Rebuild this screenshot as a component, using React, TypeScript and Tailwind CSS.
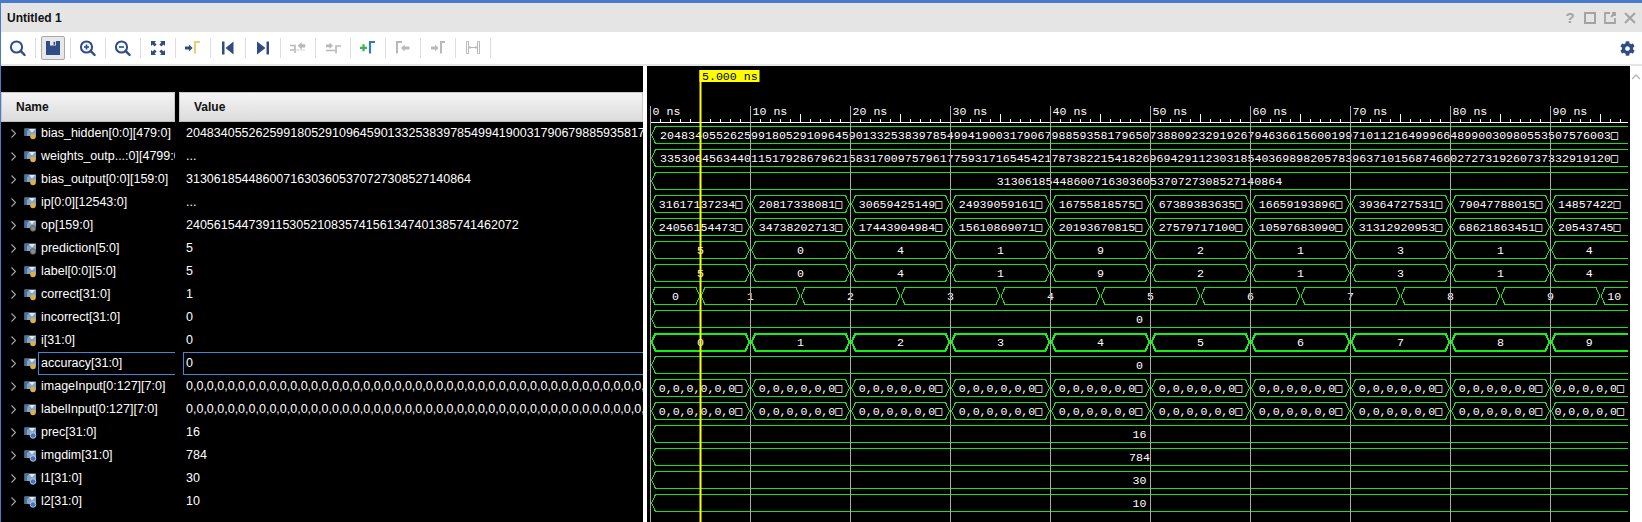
import { ReactNode } from 'react';
import { FaCog } from 'react-icons/fa';

const NAVY = '#2f4c86';
const GRAY = '#b9b9b9';
const GREEN = '#16e316';

const BIAS_HIDDEN =
  '2048340552625991805291096459013325383978549941900317906798859358179650738809232919267946366156001997101121649996648990030980553507576003□';
const WEIGHTS =
  '3353064563440115179286796215831700975796177593171654542178738221541826969429112303185403698982057839637101568746602727319260737332919120□';
const BIAS_OUTPUT = '31306185448600716303605370727308527140864';
const ZEROS = Array(45).fill('0').join(',');

type IconKind = 'lock' | 'gear' | 'param';

const signals: { name: string; value: string; icon: IconKind; selected?: boolean }[] = [
  { name: 'bias_hidden[0:0][479:0]', value: BIAS_HIDDEN.slice(0, 66), icon: 'lock' },
  { name: 'weights_outp...:0][4799:0]', value: '...', icon: 'lock' },
  { name: 'bias_output[0:0][159:0]', value: BIAS_OUTPUT, icon: 'lock' },
  { name: 'ip[0:0][12543:0]', value: '...', icon: 'lock' },
  { name: 'op[159:0]', value: '240561544739115305210835741561347401385741462072', icon: 'gear' },
  { name: 'prediction[5:0]', value: '5', icon: 'gear' },
  { name: 'label[0:0][5:0]', value: '5', icon: 'lock' },
  { name: 'correct[31:0]', value: '1', icon: 'lock' },
  { name: 'incorrect[31:0]', value: '0', icon: 'lock' },
  { name: 'i[31:0]', value: '0', icon: 'lock' },
  { name: 'accuracy[31:0]', value: '0', icon: 'lock', selected: true },
  { name: 'imageInput[0:127][7:0]', value: ZEROS, icon: 'lock' },
  { name: 'labelInput[0:127][7:0]', value: ZEROS, icon: 'lock' },
  { name: 'prec[31:0]', value: '16', icon: 'param' },
  { name: 'imgdim[31:0]', value: '784', icon: 'param' },
  { name: 'l1[31:0]', value: '30', icon: 'param' },
  { name: 'l2[31:0]', value: '10', icon: 'param' },
];

const ipVals = ['31617137234□', '20817338081□', '30659425149□', '24939059161□', '16755818575□', '67389383635□', '16659193896□', '39364727531□', '79047788015□', '14857422□'];
const opVals = ['24056154473□', '34738202713□', '17443904984□', '15610869071□', '20193670815□', '27579717100□', '10597683090□', '31312920953□', '68621863451□', '20543745□'];
const predVals = ['5', '0', '4', '1', '9', '2', '1', '3', '1', '4'];
const countVals = ['0', '1', '2', '3', '4', '5', '6', '7', '8', '9'];
const zeroVals = [...Array(9).fill('0,0,0,0,0,0□'), '0,0,0,0,0□'];

const X0 = 650.5;
const XEND = 1628;
const ticks = Array.from({ length: 10 }, (_, k) => X0 + k * 100);

function Bus({ a, b, row, gap = 1, openRight = false, color = GREEN, thick = false }: { a: number; b: number; row: number; gap?: number; openRight?: boolean; color?: string; thick?: boolean }) {
  const top = 122 + row * 23 + 4.5;
  const bot = top + 17;
  const mid = top + 8.5;
  const pts = openRight
    ? `${b},${top} ${a + gap + 4},${top} ${a + gap},${mid} ${a + gap + 4},${bot} ${b},${bot}`
    : `${a + gap},${mid} ${a + gap + 4},${top} ${b - gap - 4},${top} ${b - gap},${mid} ${b - gap - 4},${bot} ${a + gap + 4},${bot} ${a + gap},${mid}`;
  return <polyline points={pts} fill="none" stroke={color} strokeWidth={thick ? 2 : 1} shapeRendering="crispEdges" />;
}

function WaveText({ x, row, children, anchor = 'middle', fit }: { x: number; row: number; children: string; anchor?: 'middle' | 'start'; fit?: number }) {
  const clipped = children.endsWith('□');
  return (
    <text x={x} y={122 + row * 23 + 17} textAnchor={anchor} textLength={fit} className="fill-white text-[11.6px] font-['Liberation_Mono',monospace]">
      {clipped ? children.slice(0, -1) : children}
      {clipped && <tspan className="font-['DejaVu_Sans_Mono',monospace]">□</tspan>}
    </text>
  );
}

function SegRow({ row, vals, thick }: { row: number; vals: string[]; thick?: boolean }) {
  return (
    <>
      {vals.map((v, k) => {
        const a = ticks[k];
        const last = k === vals.length - 1;
        const b = last ? XEND : ticks[k + 1];
        return (
          <g key={k}>
            <Bus a={a} b={b} row={row} openRight={last} thick={thick} color={thick ? '#14f014' : GREEN} />
            <WaveText x={(a + b) / 2} row={row}>{v}</WaveText>
          </g>
        );
      })}
    </>
  );
}

function WaveView() {
  const edges = [X0, ...ticks.map((t) => t + 50), XEND];
  const rulerMinor = Array.from({ length: 98 }, (_, k) => X0 + k * 10);
  return (
    <svg viewBox="647 66 983 456" className="block h-[456px] w-[983px]">
      {/* ruler */}
      <line x1={650} x2={XEND} y1={122.5} y2={122.5} stroke="#fff" shapeRendering="crispEdges" />
      {rulerMinor.map((x, k) => (
        <line key={k} x1={x} x2={x} y1={k % 5 === 0 ? 114 : 119} y2={122} stroke="#fff" shapeRendering="crispEdges" />
      ))}
      {ticks.map((x, k) => (
        <text key={k} x={x + 2} y={114.5} className="fill-white text-[11.6px] font-['Liberation_Mono',monospace]">
          {k * 10} ns
        </text>
      ))}

      {/* long values */}
      <Bus a={X0} b={XEND} row={0} openRight />
      <WaveText x={660} row={0} anchor="start" fit={958}>{BIAS_HIDDEN}</WaveText>
      <Bus a={X0} b={XEND} row={1} openRight />
      <WaveText x={660} row={1} anchor="start" fit={958}>{WEIGHTS}</WaveText>
      <Bus a={X0} b={XEND} row={2} openRight />
      <WaveText x={1139.5} row={2}>{BIAS_OUTPUT}</WaveText>

      <SegRow row={3} vals={ipVals} />
      <SegRow row={4} vals={opVals} />
      <SegRow row={5} vals={predVals} />
      <SegRow row={6} vals={predVals} />

      {/* correct changes on the falling edge, so it sits half a period over */}
      {[...countVals, '10'].map((v, k) => {
        const a = edges[k];
        const b = edges[k + 1];
        const last = k === 10;
        return (
          <g key={k}>
            <Bus a={a} b={b} row={7} gap={0.5} openRight={last} />
            <WaveText x={(a + b) / 2} row={7}>{v}</WaveText>
          </g>
        );
      })}

      <Bus a={X0} b={XEND} row={8} openRight />
      <WaveText x={1139.5} row={8}>0</WaveText>
      <SegRow row={9} vals={countVals} thick />
      <Bus a={X0} b={XEND} row={10} openRight />
      <WaveText x={1139.5} row={10}>0</WaveText>
      <SegRow row={11} vals={zeroVals} />
      <SegRow row={12} vals={zeroVals} />
      {['16', '784', '30', '10'].map((v, k) => (
        <g key={v}>
          <Bus a={X0} b={XEND} row={13 + k} openRight />
          <WaveText x={1139.5} row={13 + k}>{v}</WaveText>
        </g>
      ))}

      {/* grid */}
      {ticks.map((x) => (
        <line key={x} x1={x} x2={x} y1={106} y2={522} stroke="#a9a9a9" shapeRendering="crispEdges" />
      ))}

      {/* cursor */}
      <rect x={699.5} y={70} width={2} height={452} fill="#ffff00" />
      <rect x={699.5} y={70} width={60} height={12} fill="#ffff00" />
      <text x={702} y={80} className="fill-black text-[11.6px] font-['Liberation_Mono',monospace]">
        5.000 ns
      </text>
    </svg>
  );
}

function ToolIcon({ children }: { children: ReactNode }) {
  return (
    <svg viewBox="0 0 20 20" className="h-5 w-5">
      {children}
    </svg>
  );
}

function Glass({ inner }: { inner?: 'plus' | 'minus' }) {
  return (
    <ToolIcon>
      <circle cx="8.5" cy="9" r="5.6" fill="#f4f7fb" stroke={NAVY} strokeWidth="2" />
      <path d="M12.8 13.2 L16.6 17" stroke={NAVY} strokeWidth="2.4" strokeLinecap="round" />
      {inner && <path d="M6 9 H11" stroke={NAVY} strokeWidth="1.6" />}
      {inner === 'plus' && <path d="M8.5 6.5 V11.5" stroke={NAVY} strokeWidth="1.6" />}
    </ToolIcon>
  );
}

const tools: ReactNode[] = [
  <Glass key="find" />,
  <ToolIcon key="save">
    <path d="M3 3 H17 V17 H3 Z" fill={NAVY} />
    <path d="M7 3 H13 V7.5 H7 Z" fill="#e8e8e8" />
    <path d="M10.5 3.8 H12.2 V6.8 H10.5 Z" fill={NAVY} />
  </ToolIcon>,
  <Glass key="in" inner="plus" />,
  <Glass key="out" inner="minus" />,
  <ToolIcon key="fit">
    <path d="M3 3 H8 L6.6 4.6 L8.6 6.6 L6.6 8.6 L4.6 6.6 L3 8 Z M17 3 V8 L15.4 6.6 L13.4 8.6 L11.4 6.6 L13.4 4.6 L12 3 Z M3 17 V12 L4.6 13.4 L6.6 11.4 L8.6 13.4 L6.6 15.4 L8 17 Z M17 17 H12 L13.4 15.4 L11.4 13.4 L13.4 11.4 L15.4 13.4 L17 12 Z" fill={NAVY} />
  </ToolIcon>,
  <ToolIcon key="goto">
    <path d="M2 8.4 H6 V6.4 L9.6 10 L6 13.6 V11.6 H2 Z" fill={NAVY} />
    <path d="M12 15.5 V4 H17" fill="none" stroke="#e6cf7c" strokeWidth="2.2" />
  </ToolIcon>,
  <ToolIcon key="first">
    <path d="M4 3.5 H6.5 V16.5 H4 Z M15.5 3.5 V16.5 L7.5 10 Z" fill={NAVY} />
  </ToolIcon>,
  <ToolIcon key="last">
    <path d="M4 3.5 L12.5 10 L4 16.5 Z M13.5 3.5 H16 V16.5 H13.5 Z" fill={NAVY} />
  </ToolIcon>,
  <ToolIcon key="prev">
    <path d="M2 7.5 H7 V15 M2 12 H6" fill="none" stroke={GRAY} strokeWidth="1.6" />
    <path d="M10 7.8 L13.5 4.6 V6.6 H17 V9.2 H13.5 V11 Z M8 12 H17" fill={GRAY} stroke={GRAY} strokeWidth="0.6" />
  </ToolIcon>,
  <ToolIcon key="next">
    <path d="M3 6.4 H6.5 V4.6 L10 7.8 L6.5 11 V9.2 H3 Z" fill={GRAY} />
    <path d="M3 12.5 H12 M18 8 H13 V15.5" fill="none" stroke={GRAY} strokeWidth="1.6" />
  </ToolIcon>,
  <ToolIcon key="add">
    <path d="M2 9.8 H9 M5.5 6.3 V13.3" stroke="#3bb44a" strokeWidth="2.2" />
    <path d="M12 15.5 V4 H17" fill="none" stroke="#2f7fb8" strokeWidth="2.2" />
  </ToolIcon>,
  <ToolIcon key="mprev">
    <path d="M4 15.5 V4 H9" fill="none" stroke={GRAY} strokeWidth="2" />
    <path d="M8 10 L11.6 6.6 V8.6 H16.5 V11.4 H11.6 V13.4 Z" fill={GRAY} />
  </ToolIcon>,
  <ToolIcon key="mnext">
    <path d="M3 8.6 H7 V6.8 L10.6 10 L7 13.2 V11.4 H3 Z" fill={GRAY} />
    <path d="M13 15.5 V4 H17" fill="none" stroke={GRAY} strokeWidth="2" />
  </ToolIcon>,
  <ToolIcon key="swap">
    <path d="M3.5 3.5 V15.5 H5.5 V3.5 Z M14.5 3.5 V15.5 H16.5 V3.5 Z" fill="none" stroke={GRAY} strokeWidth="1" />
    <path d="M6 9.5 H14 M7.5 8 L6 9.5 L7.5 11 M12.5 8 L14 9.5 L12.5 11" fill="none" stroke={GRAY} strokeWidth="1" />
  </ToolIcon>,
];

function SignalIcon({ kind }: { kind: IconKind }) {
  return (
    <svg viewBox="0 0 13 13" className="mr-[4px] h-[13px] w-[13px] shrink-0">
      <path d="M0.5 1.5 H12 V9 H0.5 Z" fill="#86a3c2" />
      <path d="M0.5 1.5 H5.5 L3 4.5 V9 H0.5 Z" fill="#4d7299" />
      <path d="M5 2 L11 2 L8 5.5 Z" fill="#e2ebf4" />
      {kind === 'lock' && <circle cx="9" cy="9.5" r="2.8" fill="#dcb04e" />}
      {kind === 'gear' && <circle cx="9" cy="9.5" r="2.8" fill="#8b8b8b" stroke="#555" strokeWidth="0.8" />}
      {kind === 'param' && <circle cx="9" cy="9.5" r="2.8" fill="#3f74c4" stroke="#cfe0f5" strokeWidth="0.8" />}
    </svg>
  );
}

function HeaderCell({ label, className }: { label: string; className: string }) {
  return (
    <div className={`flex h-[30px] items-center border-y border-t-[#c9c9c9] border-b-[#bdbdbd] bg-gradient-to-b from-[#f4f4f4] to-[#dcdcdc] text-[12px] font-bold text-[#111] ${className}`}>
      {label}
    </div>
  );
}

export default function App() {
  return (
    <div className="flex h-[522px] w-[1642px] flex-col overflow-hidden border-t-[3px] border-l border-[#4a7bc8] bg-white font-['Liberation_Sans',Arial,sans-serif]">
      {/* Title bar */}
      <div className="flex h-[29px] shrink-0 items-center justify-between bg-[#e5e5e5] pl-[6px]">
        <span className="text-[12px] font-bold text-[#111]">Untitled 1</span>
        <div className="flex items-center pr-[6px] text-[#a3a3a3]">
          <span className="flex w-[10px] justify-center text-[15px] font-bold leading-none">?</span>
          <svg viewBox="0 0 12 12" className="ml-[9px] h-3 w-3" fill="none" stroke="currentColor" strokeWidth="2"><rect x="1" y="1" width="10" height="10" /></svg>
          <svg viewBox="0 0 12 12" className="ml-2 h-3 w-3" fill="none" stroke="currentColor" strokeWidth="1.8"><path d="M6 1 H1 V11 H11 V6 M7 5 L11 1 M8 1 H11 V4" /></svg>
          <svg viewBox="0 0 12 12" className="ml-2 h-3 w-3" fill="none" stroke="currentColor" strokeWidth="2"><path d="M1 1 L11 11 M11 1 L1 11" /></svg>
        </div>
      </div>

      {/* Toolbar */}
      <div className="flex h-[32px] shrink-0 items-center justify-between">
        <div className="flex items-center">
          {tools.map((icon, k) => (
            <div key={k} className="flex h-5 w-[35px] items-center justify-center border-r border-[#dddddd]">
              {k === 1 ? (
                <div className="flex h-6 w-6 items-center justify-center rounded-[2px] border border-[#a9a9a9] bg-[#e8e8e8]">{icon}</div>
              ) : (
                icon
              )}
            </div>
          ))}
        </div>
        <FaCog className="mr-[7px] h-[15px] w-[15px] text-[#2f4c86]" />
      </div>
      <div className="h-[2px] shrink-0 bg-[#e5e5e5]" />

      {/* Wave window */}
      <div className="flex min-h-0 flex-1">
        <div className="w-[642px] shrink-0 bg-black">
          <div className="h-[26px]" />
          <div className="flex">
            <div className="w-[174px] shrink-0">
              <HeaderCell label="Name" className="border-x border-x-[#c9c9c9] pl-[14px]" />
              {signals.map((s) => (
                <div key={s.name} className="flex h-[23px] items-center overflow-hidden pl-[10px] text-[12.5px] whitespace-nowrap text-white">
                  <svg viewBox="0 0 5 9" className="mr-[8px] h-[9px] w-[5px] shrink-0" fill="none" stroke="#a8a8a8" strokeWidth="1.1"><path d="M0.5 0.5 L4.5 4.5 L0.5 8.5" /></svg>
                  <SignalIcon kind={s.icon} />
                  <span className={s.selected ? '-ml-[3px] flex h-[23px] flex-1 items-center border border-r-0 border-[#3a8ad6] pl-[2px]' : ''}>{s.name}</span>
                </div>
              ))}
            </div>
            <div className="ml-[4px] min-w-0 flex-1 bg-black">
              <HeaderCell label="Value" className="border-x border-x-[#c9c9c9] pl-[14px]" />
              {signals.map((s) => (
                <div key={s.name} className={`flex h-[23px] items-center overflow-hidden text-[12.5px] whitespace-nowrap text-white ${s.selected ? 'ml-[4px] border border-r-0 border-[#3a8ad6] pl-[2px]' : 'pl-[7px]'}`}>
                  {s.value}
                </div>
              ))}
            </div>
          </div>
        </div>
        <div className="ml-[4px] w-[983px] shrink-0 bg-black">
          <WaveView />
        </div>
        <div className="flex flex-1 justify-center pt-[5px]">
          <svg viewBox="0 0 10 6" className="mt-[3px] h-[6px] w-[10px]" fill="none" stroke="#b5b5b5" strokeWidth="1.4"><path d="M1 5 L5 1 L9 5" /></svg>
        </div>
      </div>
    </div>
  );
}
